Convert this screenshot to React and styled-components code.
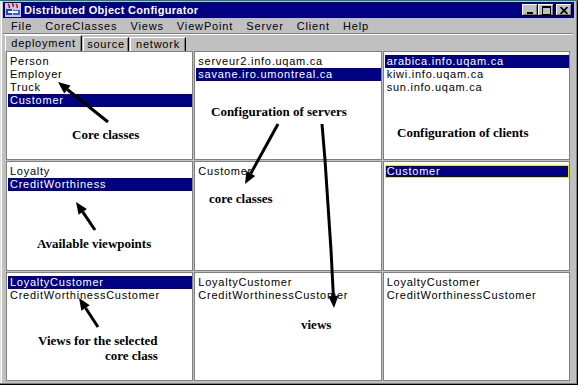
import styled, { createGlobalStyle } from "styled-components"

const GlobalStyle = createGlobalStyle`
  html, body {
    margin: 0;
    padding: 0;
    background: #008080;
  }
  body {
    font-family: "Liberation Sans", Arial, sans-serif;
  }
`

const columns = [
  [
    { items: ["Person", "Employer", "Truck", "Customer"], sel: 3 },
    { items: ["serveur2.info.uqam.ca", "savane.iro.umontreal.ca"], sel: 1 },
    { items: ["arabica.info.uqam.ca", "kiwi.info.uqam.ca", "sun.info.uqam.ca"], sel: 0 },
  ],
  [
    { items: ["Loyalty", "CreditWorthiness"], sel: 1 },
    { items: ["Customer"], sel: -1 },
    { items: ["Customer"], sel: 0, focus: true },
  ],
  [
    { items: ["LoyaltyCustomer", "CreditWorthinessCustomer"], sel: 0 },
    { items: ["LoyaltyCustomer", "CreditWorthinessCustomer"], sel: -1 },
    { items: ["LoyaltyCustomer", "CreditWorthinessCustomer"], sel: -1 },
  ],
]

const menus = ["File", "CoreClasses", "Views", "ViewPoint", "Server", "Client", "Help"]

const tabs = [
  { label: "deployment", width: 77, active: true },
  { label: "source", width: 46 },
  { label: "network", width: 56 },
]

const notes = [
  { text: "Core classes", x: 72, y: 127 },
  { text: "Configuration of servers", x: 211, y: 104 },
  { text: "Configuration of clients", x: 397, y: 125 },
  { text: "Available viewpoints", x: 37, y: 236 },
  { text: "core classes", x: 209, y: 191 },
  { text: "Views for the selected", x: 38, y: 333 },
  { text: "core class", x: 105, y: 348 },
  { text: "views", x: 301, y: 317 },
]

const arrows = [
  [[108, 122], [58, 82]],
  [[278, 124], [245, 184]],
  [[322, 124], [325, 160], [331, 250], [334, 308]],
  [[95, 230], [76, 202]],
  [[98, 327], [79, 298]],
]

const Arrow = ({ points }) => {
  const [tx, ty] = points[points.length - 2]
  const [hx, hy] = points[points.length - 1]
  const a = Math.atan2(hy - ty, hx - tx)
  const len = 12
  const w = 5
  const bx = hx - len * Math.cos(a)
  const by = hy - len * Math.sin(a)
  const line = [...points.slice(0, -1), [bx, by]].map((p) => p.join(",")).join(" ")
  const head = [
    [hx, hy],
    [bx - w * Math.sin(a), by + w * Math.cos(a)],
    [bx + w * Math.sin(a), by - w * Math.cos(a)],
  ]
    .map((p) => p.join(","))
    .join(" ")
  return (
    <g>
      <polyline points={line} fill="none" stroke="#000" strokeWidth="3" />
      <polygon points={head} fill="#000" />
    </g>
  )
}

const AppIcon = () => (
  <svg width="16" height="14" viewBox="0 0 16 14">
    <rect x="0" y="0" width="16" height="14" fill="#c8c8e8" />
    <path d="M3 1 Q5 3 4 5 M7 0 Q9 2 8 4 M11 1 Q13 3 12 5" stroke="#e00000" strokeWidth="1.5" fill="none" />
    <rect x="1" y="6" width="6" height="6" fill="#2040c0" />
    <rect x="8" y="7" width="7" height="5" fill="#4060e0" />
    <rect x="3" y="8" width="10" height="2" fill="#fff" />
  </svg>
)

const App = () => {
  return (
    <Screen>
      <GlobalStyle />
      <Window>
        <TitleBar>
          <AppIcon />
          <Title>Distributed Object Configurator</Title>
          <Controls>
            <CtlButton>
              <svg width="8" height="8" viewBox="0 0 8 8">
                <rect x="1" y="6" width="6" height="2" fill="#000" />
              </svg>
            </CtlButton>
            <CtlButton>
              <svg width="9" height="9" viewBox="0 0 9 9">
                <rect x="0.5" y="0.5" width="8" height="8" fill="none" stroke="#000" />
                <rect x="0" y="0" width="9" height="2" fill="#000" />
              </svg>
            </CtlButton>
            <CtlButton $gap>
              <svg width="8" height="7" viewBox="0 0 8 7">
                <path d="M0.5 0 L7.5 7 M7.5 0 L0.5 7" stroke="#000" strokeWidth="1.6" />
              </svg>
            </CtlButton>
          </Controls>
        </TitleBar>
        <MenuBar>
          {menus.map((m) => (
            <MenuItem key={m}>{m}</MenuItem>
          ))}
        </MenuBar>
        <Separator />
        <TabRow>
          {tabs.map((t) => (
            <Tab key={t.label} $w={t.width} $active={t.active}>
              {t.label}
            </Tab>
          ))}
        </TabRow>
        <Grid>
          {columns.flat().map((cell, i) => (
            <Cell key={i}>
              {cell.items.map((it, j) => (
                <Item key={j} $sel={cell.sel === j} $focus={cell.focus && cell.sel === j}>
                  {it}
                </Item>
              ))}
            </Cell>
          ))}
        </Grid>
      </Window>
      <Overlay width="578" height="385" viewBox="0 0 578 385">
        {arrows.map((a, i) => (
          <Arrow key={i} points={a} />
        ))}
      </Overlay>
      {notes.map((n) => (
        <Note key={n.text} $x={n.x} $y={n.y}>
          {n.text}
        </Note>
      ))}
    </Screen>
  )
}

export default App

const Screen = styled.div`
  position: relative;
  width: 578px;
  height: 385px;
  padding-top: 1px;
  box-sizing: border-box;
  overflow: hidden;
`

const Window = styled.div`
  width: 578px;
  height: 384px;
  box-sizing: border-box;
  background: #c0c0c0;
  padding: 1px 4px 0 3px;
  display: flex;
  flex-direction: column;
  box-shadow: inset -1px -1px #000, inset -2px -2px #808080, inset 1px 0 #dfdfdf, inset 2px 0 #fff;
`

const TitleBar = styled.div`
  height: 16px;
  background: #000080;
  display: flex;
  align-items: center;
  padding: 0 2px;
  gap: 3px;
`

const Title = styled.span`
  color: #fff;
  font-weight: bold;
  font-size: 11px;
  letter-spacing: 0.3px;
`

const Controls = styled.div`
  margin-left: auto;
  display: flex;
`

const CtlButton = styled.div`
  width: 16px;
  height: 12px;
  margin-left: ${(p) => (p.$gap ? "2px" : "0")};
  box-sizing: border-box;
  background: #c0c0c0;
  display: flex;
  align-items: center;
  justify-content: center;
  box-shadow: inset -1px -1px #000, inset 1px 1px #fff, inset -2px -2px #808080;
`

const MenuBar = styled.div`
  height: 14px;
  margin-top: 1px;
  display: flex;
  align-items: center;
  gap: 13px;
  padding-left: 8px;
`

const MenuItem = styled.span`
  font-size: 11px;
  letter-spacing: 0.85px;
  color: #000;
`

const Separator = styled.div`
  margin: 0 1px 0 0;
  border-top: 1px solid #808080;
  border-bottom: 1px solid #fff;
`

const TabRow = styled.div`
  height: 16px;
  display: flex;
  align-items: flex-end;
  padding-left: 2px;
  gap: 1px;
`

const Tab = styled.div`
  width: ${(p) => p.$w}px;
  height: ${(p) => (p.$active ? 16 : 14)}px;
  box-sizing: border-box;
  border-top: 1px solid #fff;
  border-left: 1px solid #fff;
  border-right: 1px solid #000;
  box-shadow: inset -1px 0 #808080;
  font-size: 11px;
  letter-spacing: 0.75px;
  line-height: ${(p) => (p.$active ? 14 : 13)}px;
  text-align: center;
  color: #000;
`

const Grid = styled.div`
  margin-left: 3px;
  width: 564px;
  height: 330px;
  display: grid;
  grid-template-columns: repeat(3, 1fr);
  grid-template-rows: repeat(3, 1fr);
  gap: 1px;
`

const Cell = styled.div`
  background: #fff;
  border: 1px solid #808080;
  padding: 3px 0 0 1px;
  overflow: hidden;
`

const Item = styled.div`
  height: 13px;
  line-height: 13px;
  box-sizing: border-box;
  padding-left: 2px;
  font-size: 11px;
  letter-spacing: 0.75px;
  white-space: nowrap;
  color: ${(p) => (p.$sel ? "#fff" : "#000")};
  background: ${(p) => (p.$sel ? "#000080" : "transparent")};
  border: ${(p) => (p.$focus ? "1px solid #e8e800" : "none")};
  line-height: ${(p) => (p.$focus ? 11 : 13)}px;
  padding-left: ${(p) => (p.$focus ? 1 : 2)}px;
`

const Overlay = styled.svg`
  position: absolute;
  left: 0;
  top: 0;
  pointer-events: none;
`

const Note = styled.div`
  position: absolute;
  left: ${(p) => p.$x}px;
  top: ${(p) => p.$y}px;
  font-family: "Liberation Serif", "Times New Roman", serif;
  font-weight: bold;
  font-size: 13px;
  line-height: 15px;
  white-space: nowrap;
  color: #000;
`
